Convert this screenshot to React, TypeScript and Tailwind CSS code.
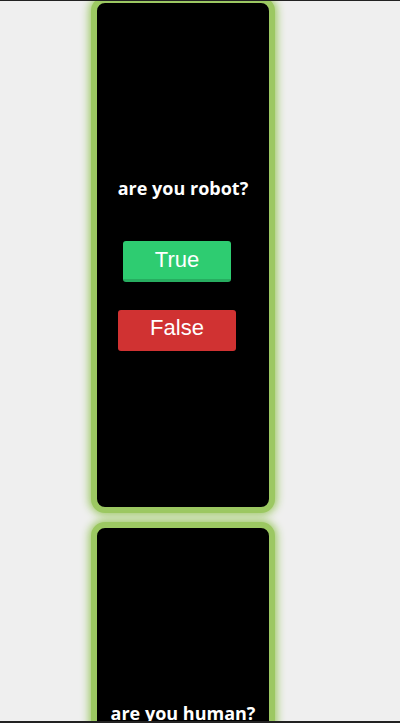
import React from 'react';

function QuestionCard({ question, children }: { question: string; children?: React.ReactNode }) {
  return (
    <div className="w-[184px] h-[516px] shrink-0 rounded-[14px] border-[6px] border-[#9cc862] bg-black shadow-[0_0_8px_2px_#9cc862] flex flex-col items-center pt-[174px]">
      <h2 className="text-white font-bold text-[18px] leading-[22px] font-['Open_Sans',sans-serif]">
        {question}
      </h2>
      {children}
    </div>
  );
}

export default function App() {
  return (
    <div className="h-[723px] overflow-hidden bg-[#efefef] border-t border-b-2 border-[#222222]">
      <div className="ml-[91px] mt-[-4px] flex flex-col gap-[9px]">
        <QuestionCard question="are you robot?">
          <div className="flex flex-col items-center gap-[28px] mt-[42px] mr-[12px] font-['Liberation_Sans',Arial,sans-serif]">
            <button className="h-[41px] px-[32px] rounded-[3px] bg-[#2ecc71] border-b-[3px] border-[#27ad60] text-white text-[22px] leading-none">
              True
            </button>
            <button className="h-[41px] px-[32px] pb-[5px] rounded-[3px] bg-[#d03232] text-white text-[22px] leading-none">
              False
            </button>
          </div>
        </QuestionCard>
        <QuestionCard question="are you human?" />
      </div>
    </div>
  );
}
